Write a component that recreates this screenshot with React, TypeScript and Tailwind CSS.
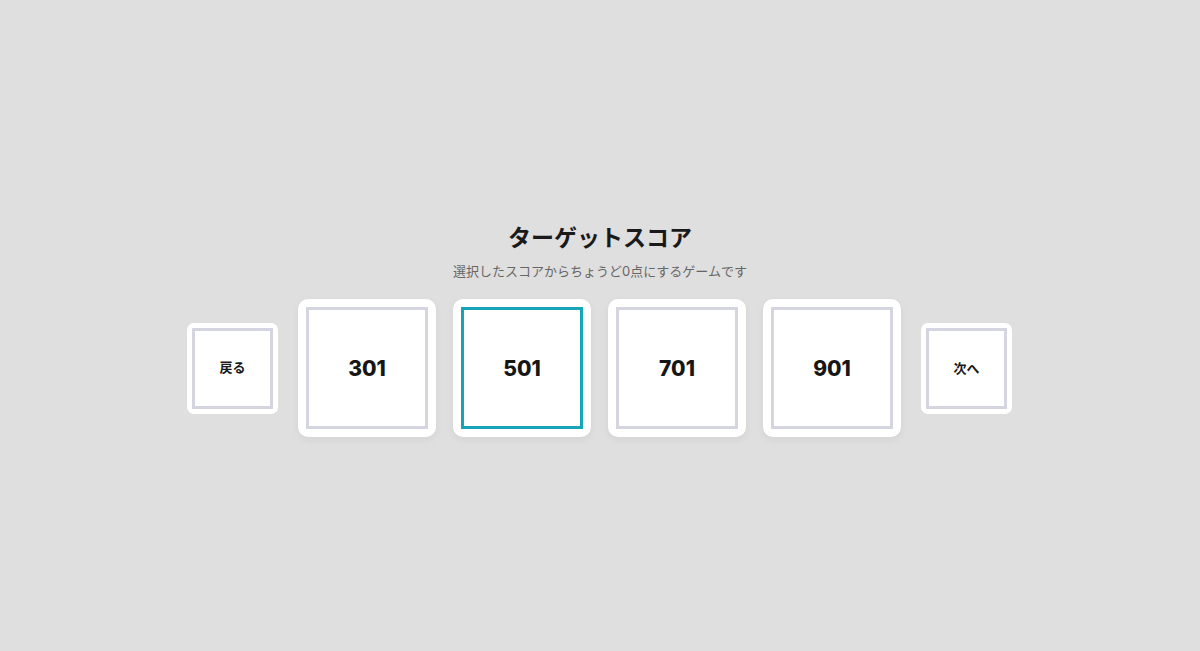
import { useState } from "react";

const scores = [301, 501, 701, 901];

export default function App() {
  const [selected, setSelected] = useState(501);

  return (
    <div
      className="min-h-screen w-full bg-[#dfdfdf] flex flex-col items-center pt-[222px]"
      style={{ fontFamily: '"Inter", "Noto Sans CJK JP", sans-serif' }}
    >
      <h1 className="text-[23px] leading-[32px] font-bold text-[#1a1a1a]">
        ターゲットスコア
      </h1>
      <p className="mt-[7px] text-[13px] leading-[20px] text-[#666666]">
        選択したスコアからちょうど0点にするゲームです
      </p>

      <div className="mt-[18px] flex items-center pr-[1px]">
        {/* Back */}
        <button className="w-[91px] h-[91px] bg-white rounded-[7px] p-[5px] mr-[20px]">
          <div className="w-full h-full border-[3px] border-[#d4d5e0] flex items-center justify-center text-[13px] font-bold text-[#1a1a1a]">
            戻る
          </div>
        </button>

        {/* Score cards */}
        <div className="flex gap-[17px]">
          {scores.map((s) => (
            <button
              key={s}
              onClick={() => setSelected(s)}
              className="w-[138px] h-[138px] bg-white rounded-[10px] p-[8px] shadow-[0_3px_8px_rgba(0,0,0,0.05)]"
            >
              <div
                className={
                  selected === s
                    ? "w-full h-full border-[3px] border-[#17a3b8] flex items-center justify-center pt-[2px] text-[21px] font-extrabold text-[#161616]"
                    : "w-full h-full border-[3px] border-[#d4d5e0] flex items-center justify-center pt-[2px] text-[21px] font-extrabold text-[#161616]"
                }
              >
                {s}
              </div>
            </button>
          ))}
        </div>

        {/* Next */}
        <button className="w-[91px] h-[91px] bg-white rounded-[7px] p-[5px] ml-[20px]">
          <div className="w-full h-full border-[3px] border-[#d4d5e0] flex items-center justify-center pt-[1px] text-[13px] font-semibold text-[#1a1a1a]">
            次へ
          </div>
        </button>
      </div>
    </div>
  );
}
